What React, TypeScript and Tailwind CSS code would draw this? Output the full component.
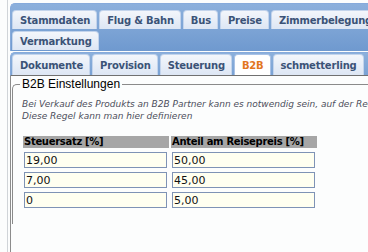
const topRow1 = ['Stammdaten', 'Flug & Bahn', 'Bus', 'Preise', 'Zimmerbelegung'];
const topRow2 = ['Vermarktung'];
const subTabs = ['Dokumente', 'Provision', 'Steuerung', 'B2B', 'schmetterling'];

const rows = [
  ['19,00', '50,00'],
  ['7,00', '45,00'],
  ['0', '5,00'],
];

function Tab({ label, active, tall }: { label: string; active?: boolean; tall?: boolean }) {
  return (
    <div
      className={`${tall ? 'h-[21px]' : 'h-[19px]'} shrink-0 flex items-center pl-[7px] pr-[6px] rounded-t-[4px] border border-b-0 text-[10px] tracking-[-0.2px] font-bold whitespace-nowrap ${
        active
          ? 'bg-white border-[#a9c2e6] text-[#e2761f]'
          : 'bg-gradient-to-b from-[#f3f6fb] to-[#dde6f4] border-[#c3d4ec] text-[#3b5377]'
      }`}
    >
      {label}
    </div>
  );
}

export default function App() {
  return (
    <div className="w-[368px] h-[252px] overflow-hidden bg-[#fcfdfd] font-['DejaVu_Sans',sans-serif]">
      <div className="ml-[7px] h-full border-l border-[#d0d4d8] pl-[2px] pt-[3px]">
        {/* main tabs */}
        <div className="rounded-tl-[5px] border-t border-l border-[#86aadb] bg-gradient-to-b from-[#8cb0dc] to-[#6f99cf] pl-[1px] pt-[6px] pb-[1px] flex flex-col gap-[2px]">
          <div className="flex gap-[2px]">
            {topRow1.map((t) => (
              <Tab key={t} label={t} />
            ))}
          </div>
          <div className="flex gap-[2px]">
            {topRow2.map((t) => (
              <Tab key={t} label={t} />
            ))}
          </div>
        </div>

        {/* sub tabs */}
        <div className="mt-[1px] rounded-tl-[5px] border-t border-l border-[#86aadb] bg-gradient-to-b from-[#8cb0dc] to-[#7aa2d4] pl-[1px] pt-[1px] border-b border-b-[#707070]">
          <div className="flex gap-[2px]">
            {subTabs.map((t) => (
              <Tab key={t} label={t} active={t === 'B2B'} tall />
            ))}
          </div>
        </div>

        {/* content */}
        <div className="h-[200px] border-l border-[#8c8c8c] bg-[#fcfdfd] pl-[1px] pt-[1px]">
          <fieldset className="rounded-tl-[5px] border-t border-l border-[#8a8a8a] pl-[9px] pb-4 min-w-0">
            <legend className="-ml-[2px] px-[2px] font-['Liberation_Sans',sans-serif] text-[12px] leading-[14px] text-black">
              B2B Einstellungen
            </legend>
            <div className="mt-[7px] text-[9px] leading-[12px] italic text-[#4d4f5c] whitespace-nowrap">
              <div>Bei Verkauf des Produkts an B2B Partner kann es notwendig sein, auf der Rechnung</div>
              <div>Diese Regel kann man hier definieren</div>
            </div>
            <div className="mt-[14px] ml-[1px] grid grid-cols-[146px_146px] gap-x-[2px] gap-y-[4px]">
              <div className="h-[12px] bg-[#a6a6a6] pl-[1px] text-[10px] leading-[12px] font-bold text-black tracking-[-0.3px] whitespace-nowrap">
                Steuersatz [%]
              </div>
              <div className="h-[12px] bg-[#a6a6a6] pl-[1px] text-[10px] leading-[12px] font-bold text-black tracking-[-0.3px] whitespace-nowrap">
                Anteil am Reisepreis [%]
              </div>
              {rows.map((r, i) =>
                r.map((v, j) => (
                  <div key={`${i}-${j}`} className="pl-[1px]">
                    <input
                      readOnly
                      value={v}
                      className="block w-[143px] h-[16px] border border-[#7f93b5] bg-[#fffff0] px-[1px] text-[11px] leading-[14px] text-[#111] outline-none font-['DejaVu_Sans',sans-serif]"
                    />
                  </div>
                ))
              )}
            </div>
          </fieldset>
        </div>
      </div>
    </div>
  );
}
